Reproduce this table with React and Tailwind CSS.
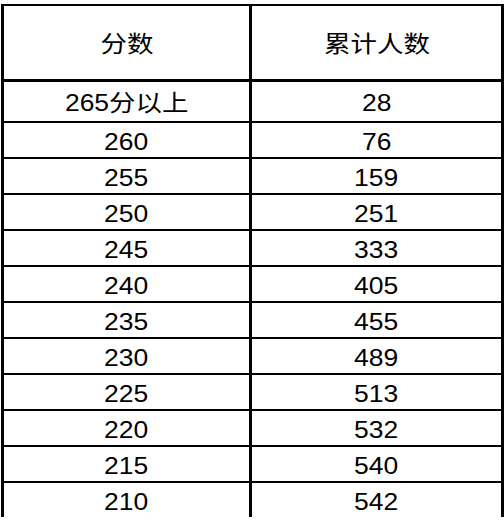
import React from 'react';

const rows = [
    ['265分以上', '28'],
    ['260', '76'],
    ['255', '159'],
    ['250', '251'],
    ['245', '333'],
    ['240', '405'],
    ['235', '455'],
    ['230', '489'],
    ['225', '513'],
    ['220', '532'],
    ['215', '540'],
    ['210', '542'],
];

// the source image is a little stretched sideways, hence the scale-x on the text
const Row = ({ left, right, className }) => (
    <div className={`flex ${className}`}>
        <div className="w-[245px] flex items-center justify-center pt-1">
            <span className="inline-block scale-x-[1.15]">{left}</span>
        </div>
        <div className="w-[3px] bg-black" />
        <div className="flex-1 flex items-center justify-center pt-1">
            <span className="inline-block scale-x-[1.15]">{right}</span>
        </div>
    </div>
);

const App = () => {
    return (
        <div
            className="w-[504px] h-[520px] overflow-hidden bg-white text-black text-[23px] leading-none"
            style={{ fontFamily: '"Liberation Sans", "Noto Sans CJK SC", sans-serif' }}
        >
            <div className="mt-1 ml-px w-[503px] border-t-2 border-l-[3px] border-r-[3px] border-black">
                <Row left="分数" right="累计人数" className="h-[76px] border-b-[3px] border-black" />
                {rows.map(([score, count], i) => (
                    <Row
                        key={score}
                        left={score}
                        right={count}
                        className={i === 0 ? 'h-[39px]' : 'h-[36px] border-t-2 border-black'}
                    />
                ))}
            </div>
        </div>
    );
};

export default App;
